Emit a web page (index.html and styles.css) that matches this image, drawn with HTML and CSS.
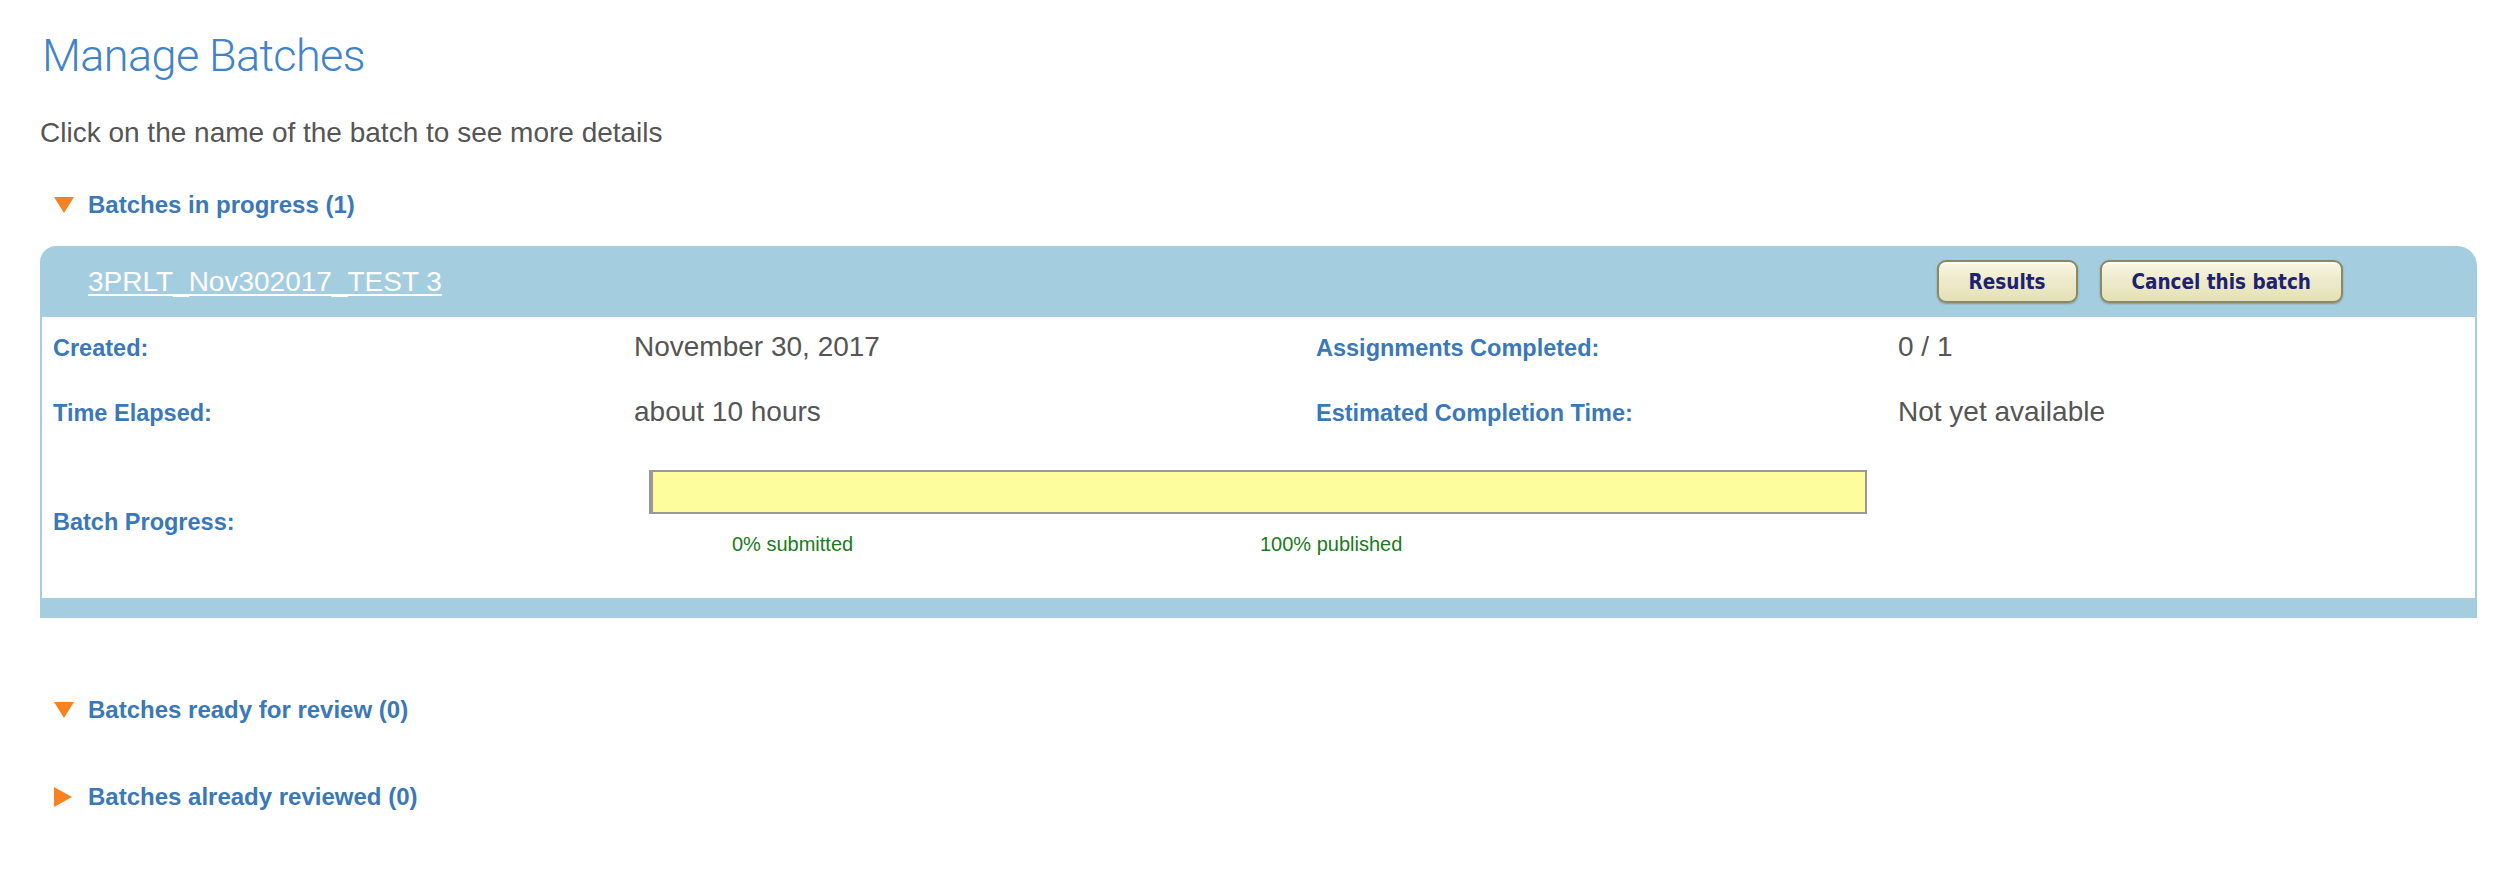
FILE: index.html
```html
<!DOCTYPE html>
<html lang="en">
<head>
<meta charset="utf-8">
<title>Manage Batches</title>
<link rel="stylesheet" href="styles.css">
</head>
<body>
<div class="page">
  <h1 class="title">Manage Batches</h1>
  <p class="intro">Click on the name of the batch to see more details</p>

  <section class="group">
    <div class="group-head">
      <svg class="tri tri-down" viewBox="0 0 20 16" aria-hidden="true"><polygon points="0,0 20,0 10,16"/></svg>
      <a class="group-link" href="#">Batches in progress (1)</a>
    </div>

    <div class="batch">
      <div class="batch-head">
        <a class="batch-name" href="#">3PRLT_Nov302017_TEST 3</a>
        <div class="actions">
          <button class="btn" type="button">Results</button>
          <button class="btn" type="button">Cancel this batch</button>
        </div>
      </div>
      <div class="batch-body">
        <div class="info-grid">
          <span class="label">Created:</span>
          <span class="value">November 30, 2017</span>
          <span class="label">Assignments Completed:</span>
          <span class="value">0 / 1</span>
          <span class="label">Time Elapsed:</span>
          <span class="value">about 10 hours</span>
          <span class="label">Estimated Completion Time:</span>
          <span class="value">Not yet available</span>
        </div>
        <div class="progress-row">
          <span class="label progress-label">Batch Progress:</span>
          <div class="progress">
            <div class="bar"><div class="bar-done" style="width:0%"></div></div>
            <div class="legend">
              <span class="legend-item legend-submitted">0% submitted</span>
              <span class="legend-item">100% published</span>
            </div>
          </div>
        </div>
      </div>
      <div class="batch-foot"></div>
    </div>
  </section>

  <section class="group group-next">
    <div class="group-head">
      <svg class="tri tri-down" viewBox="0 0 20 16" aria-hidden="true"><polygon points="0,0 20,0 10,16"/></svg>
      <a class="group-link" href="#">Batches ready for review (0)</a>
    </div>
  </section>

  <section class="group group-last">
    <div class="group-head">
      <svg class="tri tri-right" viewBox="0 0 18 20" aria-hidden="true"><polygon points="0,0 18,10 0,20"/></svg>
      <a class="group-link" href="#">Batches already reviewed (0)</a>
    </div>
  </section>
</div>
</body>
</html>
```

FILE: styles.css
```css
html, body {
  margin: 0;
  padding: 0;
  background: #ffffff;
}

body {
  font-family: "Liberation Sans", Arial, Helvetica, sans-serif;
  color: #555555;
}

.page {
  padding: 28px 29px 40px 40px;
}

.title {
  margin: 0;
  padding-left: 2px;
  font-family: "Roboto", "Liberation Sans", sans-serif;
  font-weight: 300;
  font-size: 45px;
  line-height: 56px;
  color: #4283c8;
  letter-spacing: -0.6px;
}

.intro {
  margin: 33px 0 0 0;
  font-size: 28px;
  line-height: 32px;
  color: #555555;
}

.group {
  margin-top: 42px;
}

.group-next {
  margin-top: 78px;
}

.group-last {
  margin-top: 59px;
}

.group-head {
  display: flex;
  align-items: center;
  height: 28px;
  padding-left: 14px;
}

.tri {
  fill: #f7821f;
  flex: none;
}

.tri-down {
  width: 20px;
  height: 16px;
  margin-right: 14px;
}

.tri-right {
  width: 18px;
  height: 20px;
  margin-right: 16px;
}

.group-link {
  font-size: 24px;
  line-height: 28px;
  font-weight: bold;
  color: #3a78b8;
  text-decoration: none;
}

.batch {
  margin-top: 27px;
}

.batch-head {
  display: flex;
  align-items: center;
  justify-content: space-between;
  height: 71px;
  padding: 0 134px 0 48px;
  background: #a5cde0;
  border-radius: 16px 20px 0 0;
}

.batch-name {
  font-size: 28px;
  line-height: 32px;
  color: #ffffff;
  text-decoration: underline;
  text-decoration-thickness: 2px;
  text-underline-offset: 3px;
}

.actions {
  display: flex;
  gap: 22px;
}

.btn {
  height: 43px;
  padding: 0 30px;
  border: 2px solid #8d8862;
  border-radius: 9px;
  background: linear-gradient(#f8f6e4 0%, #eeebcc 45%, #e4e0b6 100%);
  box-shadow: inset 0 2px 0 rgba(255, 255, 255, 0.8), 0 1px 2px rgba(60, 60, 30, 0.35);
  font-family: "DejaVu Sans Condensed", "DejaVu Sans", sans-serif;
  font-weight: bold;
  font-size: 20.5px;
  color: #1d2270;
  cursor: pointer;
}

.batch-body {
  background: #ffffff;
  border-left: 2px solid #a5cde0;
  border-right: 2px solid #a5cde0;
  padding: 14px 0 42px 11px;
}

.info-grid {
  display: grid;
  grid-template-columns: 581px 682px 582px 1fr;
  row-gap: 32px;
  align-items: baseline;
}

.label {
  font-size: 23.5px;
  line-height: 32px;
  font-weight: bold;
  color: #3a78b8;
}

.value {
  font-size: 28px;
  line-height: 32px;
  color: #555555;
}

.progress-row {
  display: grid;
  grid-template-columns: 581px auto;
  align-items: start;
  margin-top: 41px;
}

.progress-label {
  line-height: 28px;
  padding-top: 38px;
}

.progress {
  margin-left: 15px;
  width: 1218px;
}

.bar {
  display: flex;
  height: 44px;
  box-sizing: border-box;
  border: 2px solid #999999;
  border-left-width: 4px;
  background: #fdfd9e;
}

.bar-done {
  background: #8fbf5a;
}

.legend {
  display: grid;
  grid-template-columns: 611px 1fr;
  margin-top: 18px;
}

.legend-item {
  font-size: 20px;
  line-height: 24px;
  color: #1b7a1b;
}

.legend-submitted {
  padding-left: 83px;
}

.batch-foot {
  height: 20px;
  background: #a5cde0;
}
```
